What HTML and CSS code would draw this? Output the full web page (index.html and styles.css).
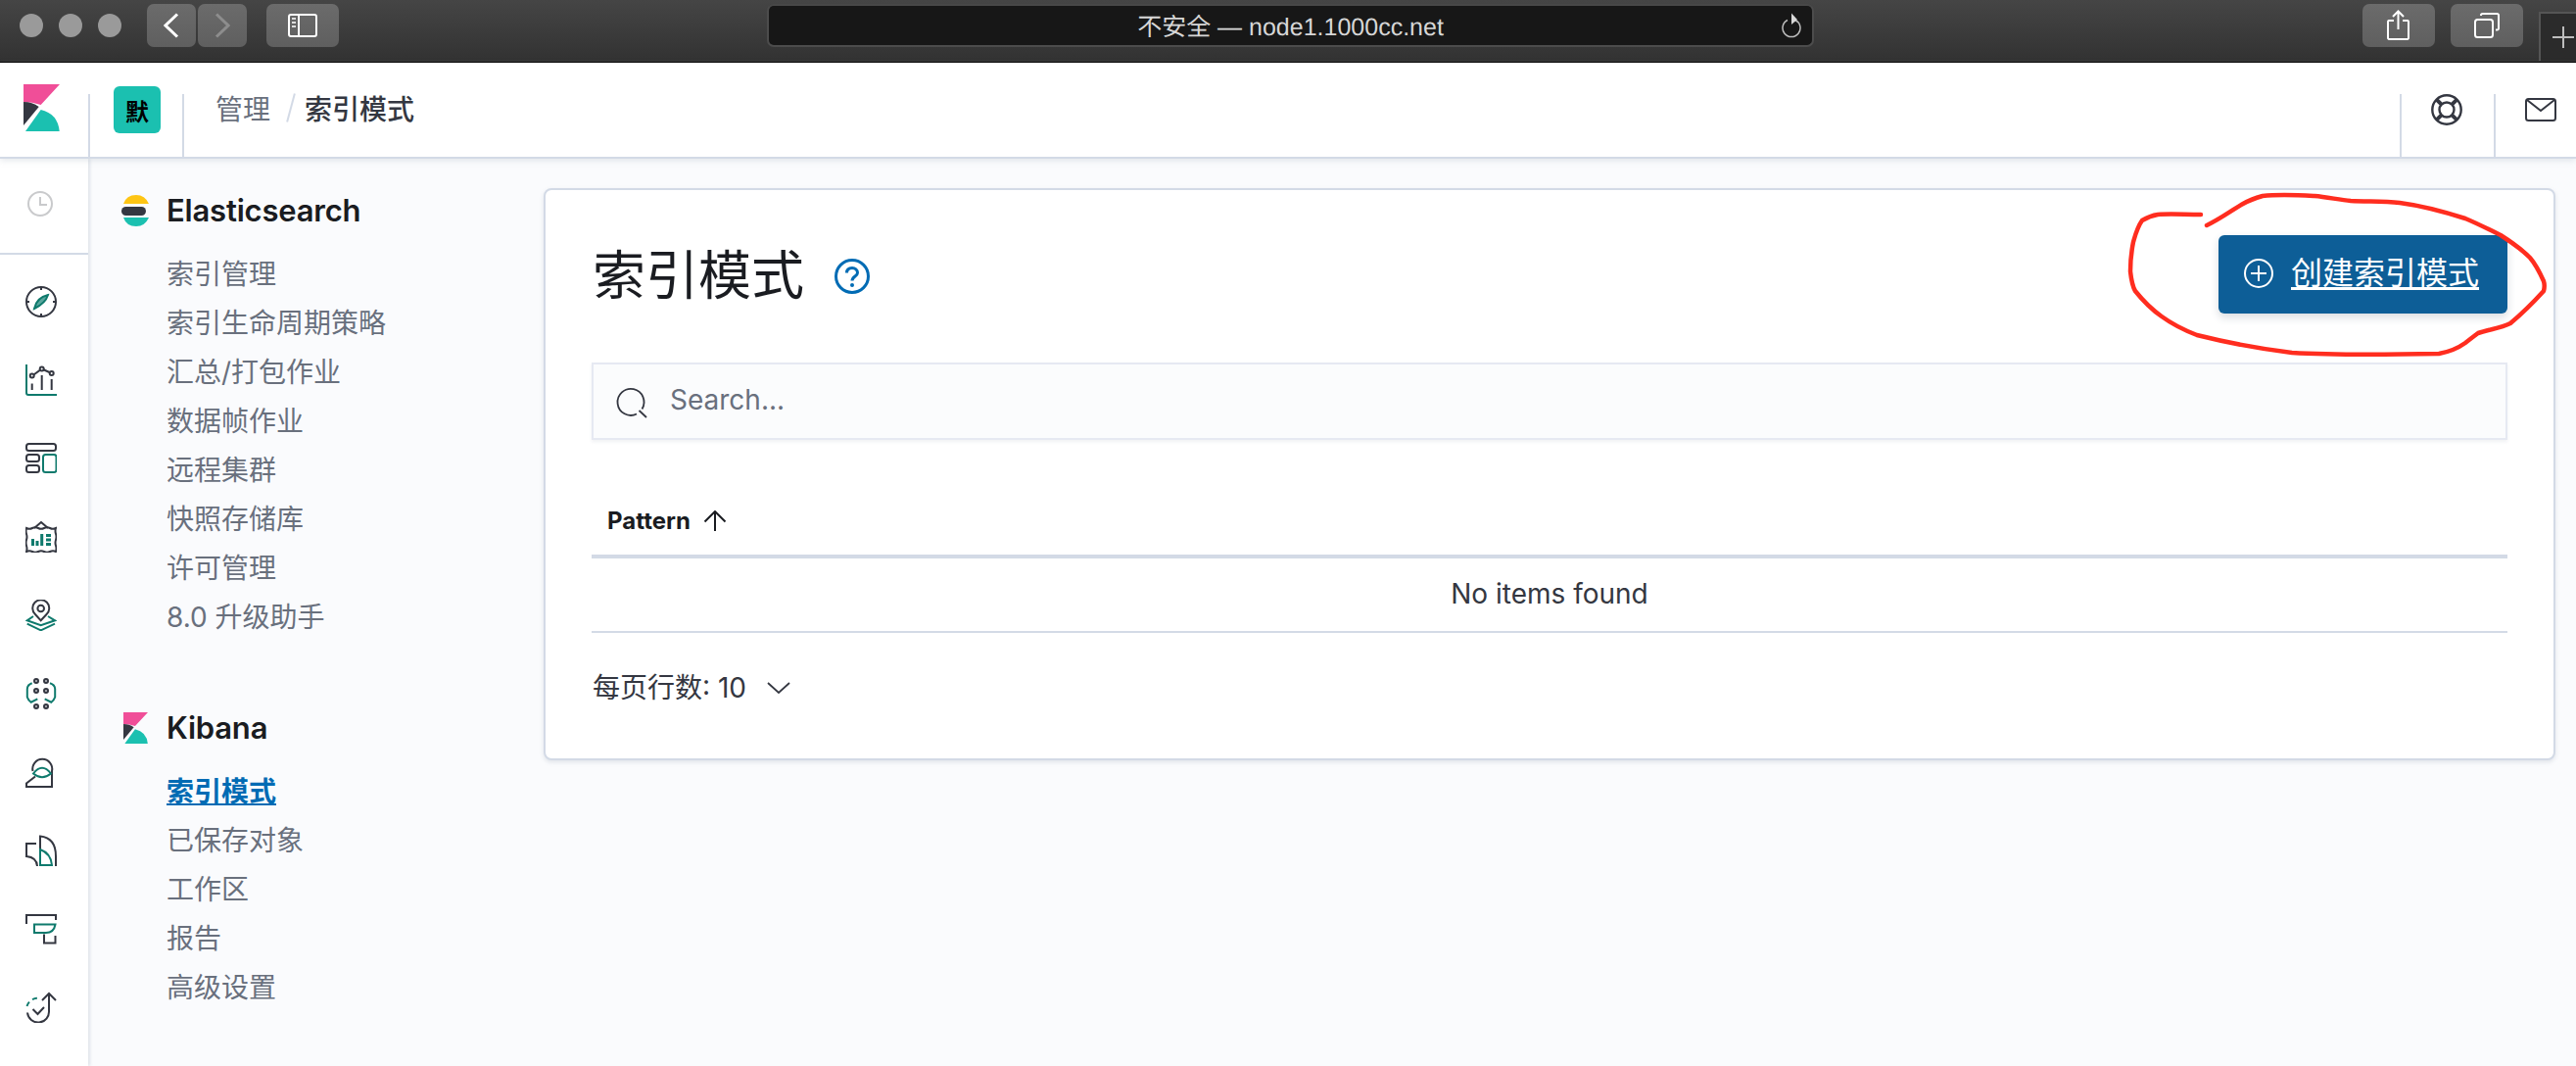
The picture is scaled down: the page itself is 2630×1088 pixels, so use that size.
FILE: index.html
```html
<!DOCTYPE html>
<html lang="zh">
<head>
<meta charset="utf-8">
<title>索引模式</title>
<link rel="stylesheet" href="styles.css">
</head>
<body>
<div class="page">
  <div class="titlebar">
    <div class="lights"><i class="light"></i><i class="light"></i><i class="light"></i></div>
    <div class="tb-btn nav-btn"><svg width="16" height="26" viewBox="0 0 16 26"><path d="M14 1.5 2 13l12 11.5" class="stroke-w"/></svg></div>
    <div class="tb-btn nav-btn fwd"><svg width="16" height="26" viewBox="0 0 16 26"><path d="M2 1.5 14 13 2 24.5" class="stroke-g"/></svg></div>
    <div class="tb-btn wide side-btn"><svg width="30" height="24" viewBox="0 0 30 24"><rect x="1" y="1" width="28" height="22" rx="2" class="stroke-t"/><path d="M11 1v22" class="stroke-t"/><path d="M4 5h4M4 9h4M4 13h4" class="stroke-s"/></svg></div>
    <div class="urlbar"><span class="url-text">不安全 — node1.1000cc.net</span>
      <svg class="reload" width="22" height="28" viewBox="0 0 22 28"><path d="M6 8.500A9 9 0 1 0 14 8.500" class="stroke-r"/><path d="M10 1.500l6 6.500-6 5z" class="fill-r"/></svg>
    </div>
    <div class="tb-btn wide share-btn"><svg width="24" height="32" viewBox="0 0 24 32"><path d="M7 11H2a1.500 1.500 0 0 0-1 1v17a1.500 1.500 0 0 0 1 1h19a1.500 1.500 0 0 0 1-1V12a1.500 1.500 0 0 0-1-1h-5" class="stroke-t"/><path d="M11.500 20V2M6 7l5.500-5.500L17 7" class="stroke-t"/></svg></div>
    <div class="tb-btn wide tabs-btn"><svg width="26" height="26" viewBox="0 0 26 26"><rect x="1" y="7" width="18" height="18" rx="2.500" class="stroke-t"/><path d="M7 3V2.500A1.500 1.500 0 0 1 8.500 1H23.500A1.500 1.500 0 0 1 25 2.500V16a1.500 1.500 0 0 1-1.500 1.500H22" class="stroke-t"/></svg></div>
    <div class="newtab"><svg width="22" height="22" viewBox="0 0 22 22"><path d="M11 0v22M0 11h22" class="stroke-p"/></svg></div>
  </div>

  <header class="appbar">
    <svg class="logo" width="37" height="48" viewBox="0 0 37 48"><path d="M0 0H37L17.700 21Q9 18 0 18Z" fill="#f04e98"/><path d="M0 18Q9 18 15.700 23L0 42Z" fill="#343741"/><path d="M2 48 17.700 26Q35 30 36.700 48Z" fill="#1bc0b0"/></svg>
    <span class="sep sep-logo"></span>
    <span class="avatar">默</span>
    <span class="sep sep-avatar"></span>
    <nav class="crumbs"><span class="crumb">管理</span><span class="slash"></span><span class="crumb-cur">索引模式</span></nav>
    <span class="grow"></span>
    <span class="sep"></span>
    <svg class="ring" width="32" height="32" viewBox="0 0 32 32"><circle cx="16" cy="16" r="14.700" class="i-ring"/><circle cx="16" cy="16" r="7.500" class="i-ring"/><path d="M5.600 5.600 10.700 10.700M26.400 5.600 21.300 10.700M5.600 26.400 10.700 21.300M26.400 26.400 21.300 21.300" class="i-band"/></svg>
    <span class="sep sep-help"></span>
    <svg class="mail" width="32" height="24" viewBox="0 0 32 24"><rect x="1" y="1" width="30" height="22" rx="2.500" class="i-d"/><path d="M2 2l14 11L30 2" class="i-d"/></svg>
  </header>

  <div class="workspace">
    <aside class="rail">
      <div class="rail-top">
        <svg width="26" height="26" viewBox="0 0 26 26"><circle cx="13" cy="13" r="12" class="i-l"/><path d="M13 6v8h7" class="i-l"/></svg>
      </div>
      <div class="rail-list">
        <div class="rail-item"><svg width="32" height="32" viewBox="0 0 32 32"><circle cx="16" cy="16" r="15" class="i-d"/><path d="M16 1v3M16 28v3M1 16h3M28 16h3" class="i-d"/><path d="M23 9Q20.500 17.500 9 23 11.500 11.500 23 9Z" class="i-needle"/></svg></div>
        <div class="rail-item"><svg width="32" height="32" viewBox="0 0 32 32"><path d="M1 0V29Q1 31 3 31H32" class="i-t"/><path d="M7 11.500 16.700 4.500 26.700 9" class="i-d"/><circle cx="6.700" cy="11.500" r="2" class="i-w"/><circle cx="16.700" cy="4.500" r="2" class="i-w"/><circle cx="26.700" cy="9" r="2" class="i-w"/><path d="M6.700 19.500V26M16.700 11V26M26.700 15V26" class="i-d"/></svg></div>
        <div class="rail-item"><svg width="32" height="32" viewBox="0 0 32 32"><rect x="1" y="1" width="30" height="7" rx="2.500" class="i-d"/><rect x="1" y="12" width="13" height="7" rx="2.500" class="i-d"/><rect x="1" y="23" width="13" height="7" rx="2.500" class="i-d"/><rect x="18" y="12" width="13.500" height="18" rx="2.500" class="i-t"/></svg></div>
        <div class="rail-item"><svg width="32" height="32" viewBox="0 0 32 32"><path d="M9 7 16 1l7 6" class="i-d"/><path d="M1 7Q4 8.500 7 7T13 7 19 7 25 7 31 7Q30 10 31 13T31 19 31 25 31 31Q28 29.500 25 31T19 31 13 31 7 31 1 31Q2 28 1 25T1 19 1 13 1 7Z" class="i-d"/><path d="M7.500 18v7M12 20v5M16.700 13V25" class="i-tb"/><path d="M21 14.500h5M21 19h5M21 23.500h5" class="i-tb"/></svg></div>
        <div class="rail-item"><svg width="32" height="32" viewBox="0 0 32 32"><path d="M15.700 21.300 10 15A8.500 8.500 0 1 1 21.500 15Z" class="i-d"/><circle cx="15.700" cy="9" r="3.300" class="i-d"/><path d="M8 17 1.700 21.300 15.700 26.300 30 21.300 23 17" class="i-t"/><path d="M1.700 24.700 15.700 31.300 30 24.700" class="i-t"/></svg></div>
        <div class="rail-item"><svg width="32" height="32" viewBox="0 0 32 32"><circle cx="11" cy="3" r="2" class="i-dot"/><circle cx="21" cy="3" r="2" class="i-dot"/><circle cx="11" cy="13" r="2" class="i-dot"/><circle cx="21" cy="13" r="2" class="i-dot"/><circle cx="11" cy="29" r="2" class="i-dot"/><circle cx="21" cy="29" r="2" class="i-dot"/><path d="M6.700 5.300Q2 7 1.800 11V19.500Q2.500 22 5.700 24.700L12.300 21.300" class="i-t"/><path d="M25 5.300Q30 7 30.200 11V19.500Q29.500 22 26.300 24.700L19.700 21.300" class="i-t"/></svg></div>
        <div class="rail-item"><svg width="32" height="32" viewBox="0 0 32 32"><path d="M7.500 15A10 10 0 1 1 27 15V31H1V27.500L10 20.500" class="i-d"/><path d="M8 17.500Q17 6 26 17.500 17 25 8 17.500Z" class="i-eye"/></svg></div>
        <div class="rail-item"><svg width="32" height="32" viewBox="0 0 32 32"><path d="M11 9H1V22Q11.500 23 12 32" class="i-d"/><path d="M15 15V1.500Q31 3 31 22V32" class="i-d"/><path d="M15 15V31H27Q26 19 15 15Z" class="i-t"/></svg></div>
        <div class="rail-item"><svg width="32" height="32" viewBox="0 0 32 32"><path d="M1 11V2H31V7" class="i-d"/><path d="M19 21.500V30.500H30.500V23" class="i-d"/><path d="M9 11.500H30.500Q29 20 21 20H9Z" class="i-t"/></svg></div>
        <div class="rail-item"><svg width="32" height="32" viewBox="0 0 32 32"><path d="M24 2V19.500A11 11 0 0 1 2 21.500" class="i-d"/><path d="M17 9 24 2 31 9" class="i-d"/><path d="M1.500 15A11.500 11.500 0 0 1 12.500 6.800" class="i-dash"/><path d="M7.500 18 12.500 23 19 16" class="i-d"/></svg></div>
      </div>
    </aside>

    <aside class="sidenav">
      <section class="nav-group">
        <h3 class="nav-head"><span class="nav-logo"><svg width="28" height="32" viewBox="0 0 28 32"><path d="M2 9Q5 0 15 0 24 0 28 9Z" fill="#fec514"/><rect x="0" y="12" width="25" height="9" rx="4.500" fill="#343741"/><path d="M2 23H28Q24 32 15 32 5 32 2 23Z" fill="#1bc0b0"/></svg></span>Elasticsearch</h3>
        <a class="nav-link">索引管理</a>
        <a class="nav-link">索引生命周期策略</a>
        <a class="nav-link">汇总/打包作业</a>
        <a class="nav-link">数据帧作业</a>
        <a class="nav-link">远程集群</a>
        <a class="nav-link">快照存储库</a>
        <a class="nav-link">许可管理</a>
        <a class="nav-link">8.0 升级助手</a>
      </section>
      <section class="nav-group second">
        <h3 class="nav-head"><span class="nav-logo indent"><svg width="25" height="32" viewBox="0 0 37 48" preserveAspectRatio="none"><path d="M0 0H37L17.700 21Q9 18 0 18Z" fill="#f04e98"/><path d="M0 18Q9 18 15.700 23L0 42Z" fill="#343741"/><path d="M2 48 17.700 26Q35 30 36.700 48Z" fill="#1bc0b0"/></svg></span>Kibana</h3>
        <a class="nav-link active">索引模式</a>
        <a class="nav-link">已保存对象</a>
        <a class="nav-link">工作区</a>
        <a class="nav-link">报告</a>
        <a class="nav-link">高级设置</a>
      </section>
    </aside>

    <main class="panel">
      <div class="panel-head">
        <h1 class="title">索引模式</h1>
        <svg class="help" width="36" height="36" viewBox="0 0 36 36"><circle cx="18" cy="18" r="16.500" class="i-b"/><path d="M12.500 14.500C12.500 11 15 9.500 18 9.500S23.500 11.500 23.500 14.500C23.500 18 18 18 18 22.500" class="i-b"/><circle cx="18" cy="27" r="2" fill="#006bb4"/></svg>
        <span class="grow"></span>
        <a class="create-btn"><svg width="30" height="30" viewBox="0 0 30 30"><circle cx="15" cy="15" r="14" class="i-wh"/><path d="M15 7v16M7 15h16" class="i-wh"/></svg><span class="create-label">创建索引模式</span></a>
      </div>
      <div class="search">
        <svg width="34" height="34" viewBox="0 0 34 34"><path d="M22 29.500A13.500 13.500 0 1 1 27.500 24.500" class="i-s"/><path d="M24.500 26 32 33" class="i-s"/></svg>
        <span class="placeholder">Search...</span>
      </div>
      <div class="thead"><span class="th">Pattern</span><svg width="24" height="22" viewBox="0 0 24 22"><path d="M12 21V1M1.500 11.500 12 1l10.500 10.500" class="i-k"/></svg></div>
      <div class="empty-row">No items found</div>
      <div class="pager"><span>每页行数: 10</span><svg width="24" height="12" viewBox="0 0 24 12"><path d="M1 1l11 10L23 1" class="i-s"/></svg></div>
    </main>
  </div>

  <svg class="scribble" width="2630" height="1088" viewBox="0 0 2630 1088"><path d="M2247 219C2230 219 2215 218 2203 219 2196 220 2192 222 2187 225 2182 232 2180 240 2178 247 2176 257 2175 267 2175 277 2176 286 2177 292 2180 297 2188 307 2197 316 2207 323 2218 331 2230 337 2243 342 2275 350 2308 356 2340 360 2390 363 2440 362 2490 361 2501 359 2510 355 2517 350 2522 346 2526 343 2530 340 2542 336 2553 335 2563 330 2575 320 2587 308 2597 297 2598 293 2598 290 2597 287 2593 278 2589 270 2583 263 2574 254 2564 247 2553 240 2541 234 2529 228 2517 223 2495 216 2473 210 2450 207 2433 205 2417 206 2400 205 2388 204 2376 201 2363 200 2345 199 2328 198 2310 200 2303 202 2297 204 2290 208 2278 215 2266 224 2253 230"/></svg>
</div>
</body>
</html>
```
FILE: styles.css
```css
* { box-sizing: border-box; }
html, body { margin: 0; padding: 0; }
body { background: #fafbfd; font-family: Inter, "Noto Sans CJK SC", sans-serif; color: #343741; }
.page { position: relative; width: 2630px; height: 1088px; overflow: hidden; display: flex; flex-direction: column; }
svg { display: block; flex: none; fill: none; }

/* browser chrome */
.titlebar { height: 64px; flex: none; display: flex; align-items: flex-start; padding-top: 4px; background: linear-gradient(#454545, #323232); border-bottom: 1px solid #000; }
.lights { display: flex; gap: 16px; margin: 10px 0 0 20px; }
.light { width: 24px; height: 24px; border-radius: 50%; background: #9a9a9a; display: block; }
.tb-btn { height: 44px; flex: none; display: flex; align-items: center; justify-content: center; border-radius: 7px; background: linear-gradient(#6b6b6b, #5f5f5f); }
.nav-btn { width: 50px; margin-left: 2px; }
.lights + .nav-btn { margin-left: 26px; }
.wide { width: 74px; }
.side-btn { margin-left: 20px; }
.urlbar { position: relative; width: 1069px; height: 44px; flex: none; margin-left: 437px; border-radius: 7px; background: #171717; border: 2px solid #4c4c4c; border-top-color: #484848; display: flex; align-items: center; justify-content: center; }
.url-text { font: 25px "Liberation Sans", "Noto Sans CJK SC", sans-serif; text-rendering: geometricPrecision; color: #d6d6d6; }
.reload { position: absolute; right: 9px; top: 6px; }
.share-btn { margin-left: 560px; }
.tabs-btn { margin-left: 16px; }
.newtab { width: 38px; height: 50px; flex: none; margin: 8px 0 0 16px; background: #2b2b2b; border: 2px solid #555; border-right: 0; border-bottom: 0; display: flex; align-items: center; justify-content: center; padding-left: 10px; }
.stroke-w { stroke: #fff; stroke-width: 3; }
.stroke-g { stroke: #8d8d8d; stroke-width: 3; }
.stroke-t { stroke: #fff; stroke-width: 2; }
.stroke-s { stroke: #ddd; stroke-width: 2; }
.stroke-r { stroke: #bdbdbd; stroke-width: 1.5; }
.fill-r { fill: #d8d8d8; }
.stroke-p { stroke: #bdbdbd; stroke-width: 2; }

/* kibana header */
.appbar { height: 98px; flex: none; position: relative; z-index: 2; display: flex; align-items: center; background: #fff; border-bottom: 2px solid #d3dae6; box-shadow: 0 2px 6px rgba(152, 162, 179, .25); }
.sep { align-self: flex-end; width: 2px; height: 64px; background: #d3dae6; }
.logo { margin: 0 0 4px 24px; }
.sep-logo { margin-left: 29px; }
.avatar { width: 48px; height: 48px; margin-left: 24px; border-radius: 6px; background: #1bc0b0; color: #000; display: flex; align-items: center; justify-content: center; font-size: 24px; font-weight: 700; }
.sep-avatar { margin-left: 22px; }
.crumbs { margin-left: 32px; display: flex; align-items: center; font-size: 28px; padding-bottom: 4px; }
.crumb { color: #69707d; }
.crumb-cur { color: #343741; font-weight: 500; }
.slash { width: 2px; height: 30px; margin: 0 13px 0 20px; background: #d3dae6; transform: rotate(15deg); }
.grow { flex: 1; }
.ring { margin-left: 30px; }
.sep-help { margin-left: 32px; }
.mail { margin: 0 20px 0 30px; }

/* icon strokes */
.i-d { stroke: #343741; stroke-width: 2; }
.i-ring { stroke: #343741; stroke-width: 2.400; }
.i-band { stroke: #343741; stroke-width: 4; }
.i-w { stroke: #343741; stroke-width: 2; fill: #fff; }
.i-dot { stroke: #343741; stroke-width: 2; fill: #c0c1c6; }
.i-t { stroke: #0f7a6d; stroke-width: 2; }
.i-tb { stroke: #0f7a6d; stroke-width: 3; }
.i-eye { stroke: #0f7a6d; stroke-width: 2; fill: #fff; }
.i-needle { stroke: #0f7a6d; stroke-width: 2; fill: #5aa79e; }
.i-l { stroke: #c9cacc; stroke-width: 2; }
.i-b { stroke: #006bb4; stroke-width: 3; }
.i-wh { stroke: #fff; stroke-width: 2; }
.i-s { stroke: #343741; stroke-width: 1.800; }
.i-k { stroke: #1a1c21; stroke-width: 2; }
.i-dash { stroke: #0f7a6d; stroke-width: 2; stroke-dasharray: 5 4; }

/* workspace */
.workspace { flex: 1; display: flex; align-items: flex-start; min-height: 0; }
.rail { width: 90px; height: 926px; flex: none; background: #fff; box-shadow: 2px 0 3px rgba(152, 162, 179, .25); }
.rail-top { height: 98px; padding: 33px 0 0 28px; border-bottom: 2px solid #d3dae6; }
.rail-list { padding: 8px 0 0 26px; }
.rail-item { height: 80px; display: flex; align-items: center; }

.sidenav { width: 465px; flex: none; padding: 33px 0 0 34px; }
.nav-group { display: flex; flex-direction: column; }
.nav-group.second { margin-top: 68px; }
.nav-head { margin: 0 0 20px; height: 40px; display: flex; align-items: center; font-size: 31px; letter-spacing: -.2px; font-weight: 600; color: #1a1c21; line-height: 40px; }
.nav-logo { width: 46px; flex: none; }
.nav-logo.indent { padding-left: 2px; }
.nav-link { height: 50px; line-height: 50px; padding-left: 46px; font-size: 28px; color: #69707d; }
.nav-link.active { color: #006bb4; font-weight: 700; text-decoration: underline; }

/* panel */
.panel { width: 2054px; flex: none; margin-top: 30px; padding: 46px 47px 52px; background: #fff; border: 2px solid #d3dae6; border-radius: 8px; box-shadow: 0 2px 4px rgba(152, 162, 179, .25); }
.panel-head { height: 80px; display: flex; align-items: center; }
.title { margin: 0 0 0 1px; padding-top: 4px; font-size: 54px; line-height: 80px; font-weight: 400; color: #1a1c21; }
.help { margin: 4px 0 0 31px; }
.create-btn { width: 295px; height: 80px; display: flex; align-items: center; padding: 0 26px; gap: 18px; border-radius: 6px; background: #0d5e97; color: #fff; box-shadow: 0 4px 8px rgba(65, 78, 101, .2); }
.create-btn svg { margin-top: -2px; }
.create-label { font-size: 32px; line-height: 40px; text-decoration: underline; text-underline-offset: 3px; white-space: nowrap; margin-top: -2px; }
.search { height: 79px; margin-top: 50px; display: flex; align-items: center; gap: 22px; padding-left: 22px; background: #fbfcfd; border: 2px solid #e6e9f2; box-shadow: 0 2px 3px rgba(152, 162, 179, .15); }
.placeholder { font-size: 28px; color: #69707d; margin-top: -3px; }
.thead { height: 121px; padding: 59px 0 0 16px; display: flex; align-items: flex-start; gap: 13px; border-bottom: 4px solid #d3dae6; }
.thead svg { margin-top: 13px; }
.th { font-size: 24px; line-height: 48px; font-weight: 700; color: #1a1c21; }
.empty-row { height: 76px; padding-bottom: 3px; display: flex; align-items: center; justify-content: center; font-size: 28px; color: #343741; border-bottom: 2px solid #d3dae6; }
.pager { height: 40px; margin-top: 36px; padding-left: 1px; display: flex; align-items: center; gap: 21px; font-size: 28px; color: #343741; line-height: 40px; }

.scribble { position: absolute; left: 0; top: 0; z-index: 5; pointer-events: none; }
.scribble path { fill: none; stroke: #ff2d1f; stroke-width: 4.500; stroke-linecap: round; stroke-linejoin: round; }
```
